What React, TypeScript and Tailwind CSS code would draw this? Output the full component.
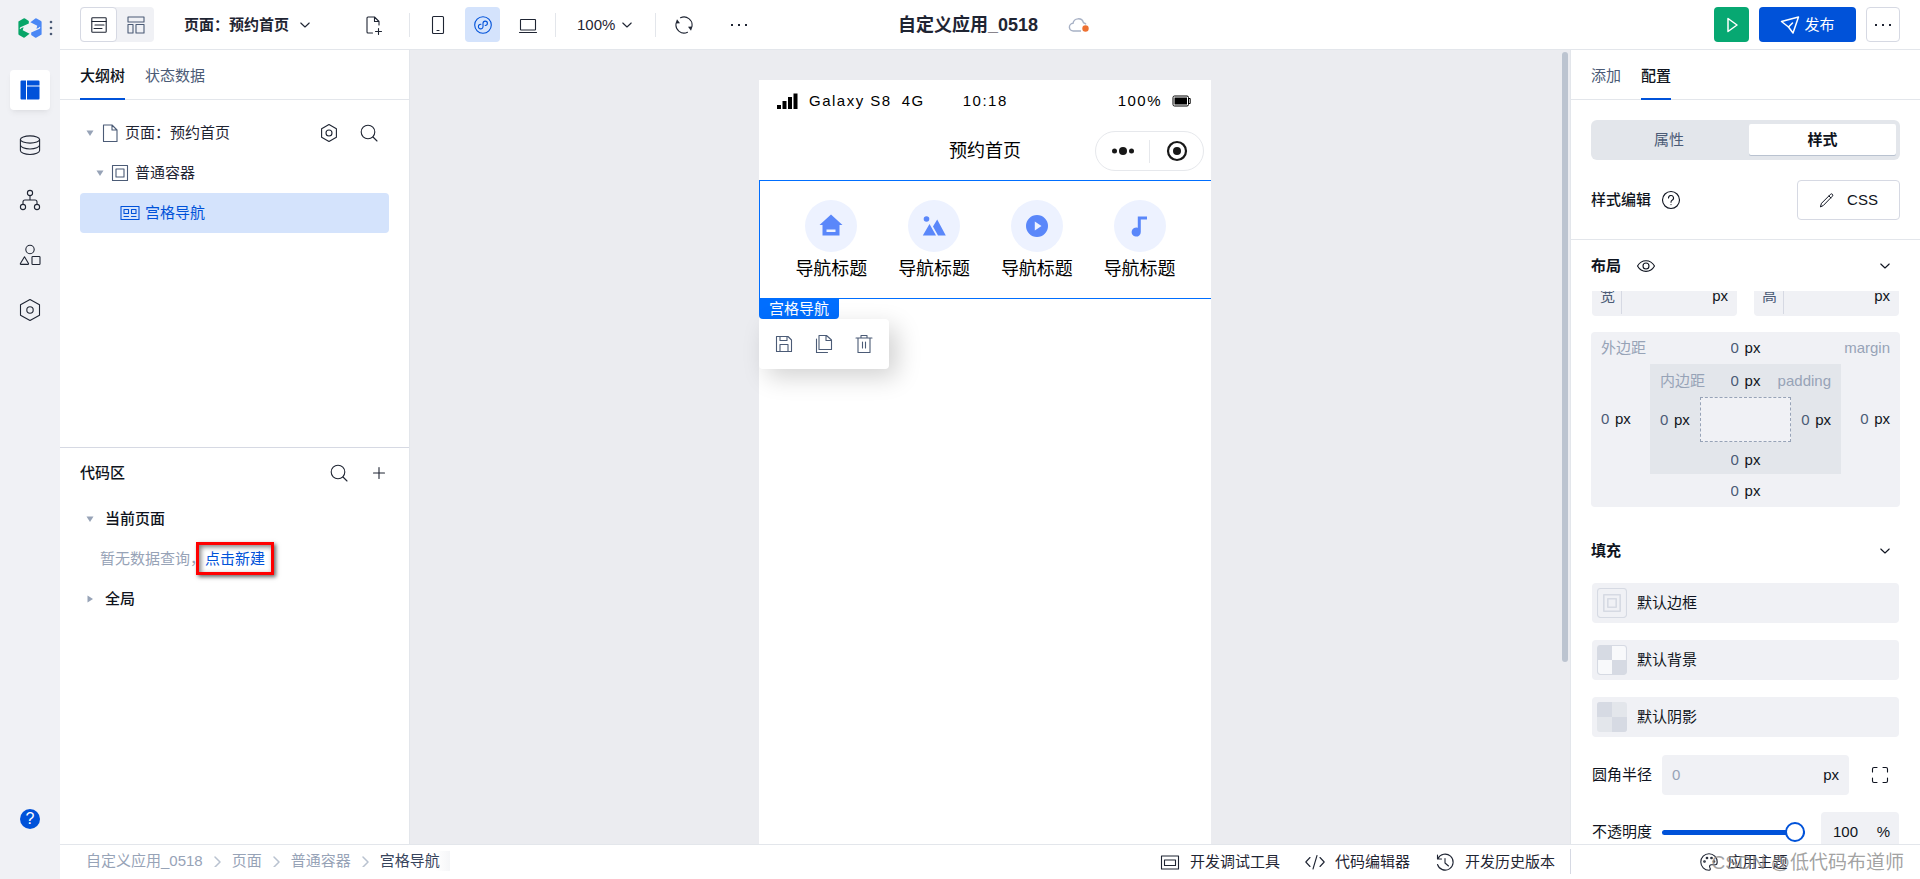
import { useState } from "react"
import type { ReactNode } from "react"

type IconProps = {
  children: ReactNode
  className?: string
  box?: string
}

function Icon({ children, className = "size-5", box = "0 0 20 20" }: IconProps) {
  return (
    <svg
      viewBox={box}
      className={`shrink-0 ${className}`}
      fill="none"
      stroke="currentColor"
      strokeWidth="1.1"
      strokeLinecap="round"
      strokeLinejoin="round"
      aria-hidden="true"
    >
      {children}
    </svg>
  )
}

const Chevron = () => (
  <Icon className="size-3" box="0 0 12 12">
    <path d="M1.8 4 6 8 10.2 4" />
  </Icon>
)

const SearchIcon = () => (
  <Icon>
    <circle cx="9" cy="9" r="6.8" />
    <path d="m14 14 4 4" />
  </Icon>
)

const HexIcon = ({ className }: { className?: string }) => (
  <Icon className={className}>
    <path d="M10 1.5 17.4 5.7v8.6L10 18.5l-7.4-4.2V5.7z" />
    <circle cx="10" cy="10" r="3" />
  </Icon>
)

const Dots = () => (
  <Icon>
    <g fill="currentColor" stroke="none">
      <rect x="2" y="9" width="2" height="2" />
      <rect x="9" y="9" width="2" height="2" />
      <rect x="16" y="9" width="2" height="2" />
    </g>
  </Icon>
)

const Caret = ({ open = true }: { open?: boolean }) => (
  <svg viewBox="0 0 8 8" className="size-2 shrink-0 fill-[#97a3b7]" aria-hidden="true">
    <path d={open ? "M.5 1.5h7L4 7z" : "M1.5.5v7L7 4z"} />
  </svg>
)

const Divider = () => <div className="h-6 w-px bg-[#e3e6eb]" />

function Logo() {
  const half =
    "M.4 3.500 5.500.5Q6.300 0 7 .5L10.800 3V5.600L2.400 9.300Q1 10.300 2.200 11.200Q3.200 9.600 5.600 9.200L4.700 12.200 11.600 15.800 7 19.300Q6.200 19.900 5.400 19.400L1 17Q.4 16.600.4 16z"
  return (
    <svg viewBox="0 0 24 20" className="h-5 w-6 shrink-0" aria-hidden="true">
      <path fill="#07a568" d={half} />
      <path fill="#4a87f5" d={half} transform="rotate(180 12 10)" />
    </svg>
  )
}

function SideRail() {
  const item = "flex size-10 items-center justify-center rounded"
  return (
    <nav className="flex w-15 shrink-0 flex-col items-center bg-[#f0f1f5] pb-[50px] text-[#1f2533]">
      <div className="flex h-[55px] w-full items-center gap-1 pl-[18px]">
        <Logo />
        <button aria-label="更多应用">
          <svg viewBox="0 0 10 16" className="h-4 w-[10px] fill-[#4b5b76]">
            <circle cx="5" cy="2" r="1.300" />
            <circle cx="5" cy="8" r="1.300" />
            <circle cx="5" cy="14" r="1.300" />
          </svg>
        </button>
      </div>
      <div className="mt-[15px] flex flex-1 flex-col gap-[15px]">
        <button className={`${item} bg-white text-[#0052d9] shadow-md shadow-black/5`} aria-label="页面">
          <Icon>
            <g fill="currentColor" stroke="none">
              <path d="M1.500.5H6v19H1.500a1 1 0 0 1-1-1v-17a1 1 0 0 1 1-1zM7 .5h11.500a1 1 0 0 1 1 1V5.500H7zM7 6.500h12.500v12a1 1 0 0 1-1 1H7z" />
            </g>
          </Icon>
        </button>
        <button className={item} aria-label="数据">
          <Icon className="size-[22px]" box="0 0 22 22">
            <ellipse cx="11" cy="5.500" rx="9.600" ry="3.600" />
            <path d="M1.400 5.500v11c0 2.200 4.300 4 9.600 4s9.600-1.800 9.600-4v-11M1.400 11c0 2.200 4.300 4 9.600 4s9.600-1.800 9.600-4" />
          </Icon>
        </button>
        <button className={item} aria-label="流程">
          <Icon className="size-[22px]" box="0 0 22 22">
            <circle cx="11" cy="4" r="2.600" />
            <circle cx="4" cy="18" r="2.600" />
            <circle cx="18" cy="18" r="2.600" />
            <path d="M11 6.600V11M4 15.400V13q0-2 2-2h10q2 0 2 2v2.400" />
          </Icon>
        </button>
        <button className={item} aria-label="素材">
          <Icon className="size-[22px]" box="0 0 22 22">
            <circle cx="11" cy="5.500" r="4.200" />
            <path d="M5.500 12.800 9.500 19.500q.3.900-.6.900H2q-.9 0-.6-.9z" />
            <rect x="13" y="12.500" width="8" height="8" rx=".8" />
          </Icon>
        </button>
        <button className={item} aria-label="设置">
          <Icon className="size-6" box="0 0 24 24">
            <path d="M12 1.500 21.500 6.700v10.600L12 22.500l-9.500-5.200V6.700z" />
            <circle cx="12" cy="12" r="3.200" />
          </Icon>
        </button>
      </div>
      <button
        className="flex size-5 items-center justify-center rounded-full bg-[#0052d9] text-base text-white"
        aria-label="帮助"
      >
        ?
      </button>
    </nav>
  )
}

function TopBar() {
  const square = "flex size-[35px] items-center justify-center rounded"
  return (
    <header className="grid h-[50px] shrink-0 grid-cols-[1fr_auto_1fr] items-center border-b border-[#e3e6eb] px-5">
      <div className="flex items-center">
        <div className="flex rounded bg-[#f0f1f5]">
          <button
            className="flex h-[35px] w-[37px] items-center justify-center rounded border border-[#d6d9e3] bg-white"
            aria-label="编辑视图"
          >
            <Icon className="size-4" box="0 0 16 16">
              <rect x=".8" y=".8" width="14.400" height="14.400" rx=".8" />
              <path d="M1 4.500h14M4 8h9M3 11.500h8" />
            </Icon>
          </button>
          <button
            className="flex h-[35px] w-[37px] items-center justify-center text-[#4b5b76]"
            aria-label="布局视图"
          >
            <Icon className="size-[18px]" box="0 0 18 18">
              <path d="M1 1h16v5H1zM1 8.500h5v8.500H1zM9 8.500h8v8.500H9z" />
            </Icon>
          </button>
        </div>
        <button className="ml-[30px] flex items-center gap-[10px] font-bold">
          页面：预约首页
          <Chevron />
        </button>
        <button className="mr-[26px] ml-[52px]" aria-label="新建页面">
          <Icon>
            <path d="M9.500 18H5q-1 0-1-1V3q0-1 1-1h6.500L16 6.500V10M11.500 2v4.500H16M15.500 13.500v6M12.500 16.500h6" />
          </Icon>
        </button>
        <Divider />
        <div className="mx-[10px] flex items-center gap-[10px]">
          <button className={square} aria-label="手机">
            <Icon>
              <rect x="4.500" y="1.500" width="11" height="17" rx="1" />
              <path d="M9 15.500h2" />
            </Icon>
          </button>
          <button className={`${square} bg-[#d4e3fc] text-[#0052d9]`} aria-label="小程序">
            <Icon>
              <circle cx="10" cy="10" r="8.300" />
              <path d="M8 9.300a2.300 2.300 0 1 0 2 2.400V8.200a2.200 2.200 0 1 1 2.200 2.300" />
            </Icon>
          </button>
          <button className={square} aria-label="电脑">
            <Icon>
              <rect x="2.500" y="4.500" width="15" height="10.500" rx=".5" />
              <path d="M1.500 17.500h17" />
            </Icon>
          </button>
        </div>
        <Divider />
        <button className="mr-[22px] ml-[21px] flex items-center gap-[6px]">
          100%
          <Chevron />
        </button>
        <Divider />
        <button className="ml-[18px]" aria-label="刷新">
          <Icon>
            <path d="M6.500 2.800a8 8 0 0 1 11.400 8.700M13.500 17.200A8 8 0 0 1 2.100 8.500" />
            <path d="M1.500 8.500 3 4.300 6 8.300zM14 11.700l4.500-.2-1.500 4.200z" fill="currentColor" stroke="none" />
          </Icon>
        </button>
        <button className="ml-[35px]" aria-label="更多操作">
          <Dots />
        </button>
      </div>

      <div className="flex items-center gap-[30px] pl-2">
        <h1 className="text-lg font-bold">自定义应用_0518</h1>
        <svg viewBox="0 0 22 20" className="h-5 w-[22px]" fill="none" aria-label="未保存">
          <path
            d="M13 16H5.500A3.800 3.800 0 0 1 5 8.300a5.400 5.400 0 0 1 10.500-.6q1.700.4 2.500 1.600"
            stroke="#a7b1c5"
            strokeWidth="1.400"
          />
          <circle cx="17.500" cy="13.500" r="3.200" fill="#ed7132" />
        </svg>
      </div>

      <div className="flex items-center justify-end gap-[10px]">
        <button className={`${square} bg-[#07a872] text-white`} aria-label="预览">
          <Icon>
            <path d="M6 3.500 15 10l-9 6.500z" strokeWidth="1.500" />
          </Icon>
        </button>
        <button className="flex h-[35px] w-[97px] items-center justify-center gap-1 rounded bg-[#0052d9] text-white">
          <Icon>
            <path d="M1.500 6.500 18.500 2l-5.500 16-4.500-6z" strokeWidth="1.500" />
            <path d="m8.500 12 4-4" strokeWidth="1.500" />
          </Icon>
          发布
        </button>
        <button
          className="flex h-[35px] w-[34px] items-center justify-center rounded border border-[#d6d9e3]"
          aria-label="更多"
        >
          <Dots />
        </button>
      </div>
    </header>
  )
}

type TabsProps = {
  items: string[]
  active: number
  onChange: (i: number) => void
}

function Tabs({ items, active, onChange }: TabsProps) {
  return (
    <div className="flex h-[50px] shrink-0 gap-5 border-b border-[#e3e6eb] px-5">
      {items.map((name, i) => (
        <button
          key={name}
          onClick={() => onChange(i)}
          className={
            i === active
              ? "-mb-px border-b-2 border-[#0052d9] pt-[3px] font-medium text-[#0f1420]"
              : "-mb-px border-b-2 border-transparent pt-[3px] text-[#4b5b76]"
          }
        >
          {name}
        </button>
      ))}
    </div>
  )
}

function OutlinePanel() {
  const [tab, setTab] = useState(0)

  return (
    <aside className="flex w-[350px] shrink-0 flex-col border-r border-[#e3e6eb]">
      <section className="flex min-h-0 flex-1 flex-col">
        <Tabs items={["大纲树", "状态数据"]} active={tab} onChange={setTab} />
        <ul className="px-5 pt-[13px]">
          <li className="flex h-10 items-center pl-[6px]">
            <Caret />
            <Icon className="mr-[5px] ml-[6px] size-5 text-[#4b5b76]">
              <path d="M3.500 2h8.500l5 5v11.500H3.500zM12 2v5h5" />
            </Icon>
            <span className="flex-1">页面：预约首页</span>
            <div className="mr-[10px] flex gap-5">
              <button aria-label="页面设置">
                <HexIcon />
              </button>
              <button aria-label="搜索组件">
                <SearchIcon />
              </button>
            </div>
          </li>
          <li className="flex h-10 items-center pl-4">
            <Caret />
            <Icon className="mr-[5px] ml-[6px] size-5 text-[#4b5b76]">
              <rect x="2.500" y="2.500" width="15" height="15" />
              <rect x="6" y="6" width="8" height="8" />
            </Icon>
            普通容器
          </li>
          <li className="flex h-10 items-center gap-[5px] rounded bg-[#d4e3fc] pl-10 text-[#0052d9]">
            <Icon>
              <rect x="1" y="3.500" width="18" height="13" />
              <path d="M4 6.500h4.500v4H4zM11.500 6.500H16v4h-4.500zM4 13.500h4.500M11.500 13.500H16" />
            </Icon>
            宫格导航
          </li>
        </ul>
      </section>

      <section className="min-h-0 flex-1 border-t border-[#d6d9e3]">
        <div className="flex h-[51px] items-center gap-5 px-5">
          <h2 className="flex-1 font-medium text-[#0f1420]">代码区</h2>
          <button aria-label="搜索代码">
            <SearchIcon />
          </button>
          <button aria-label="新建代码">
            <Icon>
              <path d="M10 4.500v11M4.500 10h11" />
            </Icon>
          </button>
        </div>
        <ul className="px-5">
          <li className="flex h-10 items-center gap-[11px] pl-[6px] font-medium text-[#0f1420]">
            <Caret />
            当前页面
          </li>
          <li className="flex h-10 items-center pl-5 text-[#97a3b7]">
            <span className="-mr-[9px]">暂无数据查询，</span>
            <a
              href="#new"
              className="flex h-[33px] w-[78px] items-center justify-center border-3 border-[#ff0000] text-[#0052d9] shadow-[2px_2px_4px_rgba(0,0,0,0.6),inset_2px_2px_5px_rgba(0,0,0,0.5)]"
            >
              点击新建
            </a>
          </li>
          <li className="flex h-10 items-center gap-[11px] pl-[6px] font-medium text-[#0f1420]">
            <Caret open={false} />
            全局
          </li>
        </ul>
      </section>
    </aside>
  )
}

const navIcons = [
  <path key="home" fillRule="evenodd" d="M12 .5 23.500 11H20.500v10.500h-17V11H.5zM7.500 15.500V18h9v-2.500z" />,
  <g key="image">
    <circle cx="4.500" cy="5" r="2.800" />
    <path d="M.8 21.500 7.500 10 14 21.500zM15.200 5.500 23.800 21.500H16L11 12.500z" />
  </g>,
  <path key="play" fillRule="evenodd" d="M12 1a11 11 0 1 0 0 22 11 11 0 0 0 0-22zM9.800 7.500 16.500 12l-6.700 4.500z" />,
  <path key="music" d="M9.800 2.500h9.200v3h-6.200V18a4.600 4.600 0 1 1-3-4.300z" />,
]

function Phone() {
  return (
    <div className="mt-[30px] flex w-[452px] flex-col bg-white text-black">
      <div className="flex h-[42px] items-center pr-[20px] pl-[18px] text-[15px] tracking-widest">
        <svg viewBox="0 0 21 16" className="mr-[11px] h-4 w-[21px]" aria-hidden="true">
          <path d="M0 12h4v4H0zM5.500 8h4v8h-4zM11 4h4v12h-4zM16.500.5h4V16h-4z" />
        </svg>
        <span className="mr-[10px]">Galaxy S8</span>
        <span className="mr-[38px]">4G</span>
        <span className="flex-1">10:18</span>
        <span>100%</span>
        <svg viewBox="0 0 19 12" className="ml-[10px] h-3 w-[19px]" fill="none" aria-hidden="true">
          <rect x="1" y="1" width="15.500" height="10" rx="1.500" stroke="#000" />
          <rect x="2.500" y="2.500" width="12.500" height="7" fill="#000" />
          <path d="M17 3.500h1.200v5H17" stroke="#000" />
        </svg>
      </div>

      <div className="grid h-[58px] grid-cols-[1fr_auto_1fr] items-center">
        <h2 className="col-start-2 text-lg leading-6">预约首页</h2>
        <div className="mr-[7px] flex h-10 w-[109px] items-center justify-self-end rounded-full border border-[#e6e8ec]">
          <button className="flex flex-1 justify-center" aria-label="菜单">
            <svg viewBox="0 0 24 10" className="h-[10px] w-6 fill-[#181818]">
              <circle cx="3.500" cy="5" r="2.500" />
              <circle cx="12" cy="5" r="4" />
              <circle cx="20.500" cy="5" r="2.500" />
            </svg>
          </button>
          <span className="h-[23px] w-px bg-[#e6e8ec]" />
          <button className="flex flex-1 justify-center" aria-label="关闭">
            <svg viewBox="0 0 22 22" className="size-[22px]">
              <circle cx="11" cy="11" r="9" fill="none" stroke="#181818" strokeWidth="2.200" />
              <circle cx="11" cy="11" r="4" fill="#181818" />
            </svg>
          </button>
        </div>
      </div>

      <div className="border-y border-l border-[#006eff] px-5">
        <div className="grid grid-cols-4 pt-[19px] pb-4">
          {navIcons.map((shape, i) => (
            <div key={i} className="flex flex-col items-center">
              <div className="flex size-[52px] items-center justify-center rounded-full bg-[#edf2ff]">
                <svg viewBox="0 0 24 24" className="size-6 fill-[#5a87fa]" aria-hidden="true">
                  {shape}
                </svg>
              </div>
              <span className="pt-[5px] pb-px text-lg leading-6">导航标题</span>
            </div>
          ))}
        </div>
      </div>

      <span className="flex h-5 w-20 items-center justify-center rounded-b bg-[#006eff] text-white">宫格导航</span>
      <div className="flex h-[50px] w-[130px] items-center justify-center gap-5 rounded bg-white text-[#4b5b76] shadow-[8px_8px_24px_rgba(0,0,0,0.18)]">
        <button aria-label="保存">
          <Icon>
            <path d="M2.500 2.500H14L17.500 6v11.500h-15zM6 2.500v4h7v-4M6 17.500v-7h8v7" />
          </Icon>
        </button>
        <button aria-label="复制">
          <Icon>
            <path d="M5 1.500h7.500L17.500 6v9.500H5zM12 1.500v5h5.500M2.500 5v13.500h11" />
          </Icon>
        </button>
        <button aria-label="删除">
          <Icon>
            <path d="M2 4h16M7 4V1.500h6V4M4 4v14.500h12V4M8.500 8v6M11.500 8v6" />
          </Icon>
        </button>
      </div>
    </div>
  )
}

function Px({ label }: { label: string }) {
  return (
    <label className="flex items-center gap-[5px] leading-5">
      <input
        aria-label={label}
        defaultValue="0"
        className="w-[9px] bg-transparent text-[#4b5b76] outline-none"
      />
      px
    </label>
  )
}

function BoxModel() {
  return (
    <div className="mt-4 flex flex-col items-center rounded bg-[#f0f1f5]">
      <div className="grid h-8 w-full grid-cols-[1fr_auto_1fr] items-center px-[10px] text-[#97a3b7]">
        <span>外边距</span>
        <span className="text-[#0f1420]">
          <Px label="上外边距" />
        </span>
        <span className="text-right">margin</span>
      </div>
      <div className="flex w-full items-center justify-between px-[10px]">
        <Px label="左外边距" />
        <div className="flex h-[110px] w-[191px] flex-col items-center bg-[#e3e6eb] px-[10px]">
          <div className="grid h-[33px] w-full grid-cols-[1fr_auto_1fr] items-center text-[#97a3b7]">
            <span>内边距</span>
            <span className="text-[#0f1420]">
              <Px label="上内边距" />
            </span>
            <span className="text-right">padding</span>
          </div>
          <div className="flex w-full items-center justify-between">
            <Px label="左内边距" />
            <div className="h-[45px] w-[91px] border border-dashed border-[#97a3b7] bg-[#f0f1f5]" />
            <Px label="右内边距" />
          </div>
          <div className="flex flex-1 items-center pt-1">
            <Px label="下内边距" />
          </div>
        </div>
        <Px label="右外边距" />
      </div>
      <div className="flex h-[33px] items-center">
        <Px label="下外边距" />
      </div>
    </div>
  )
}

const fills = [
  {
    name: "默认边框",
    icon: (
      <Icon className="size-[30px] text-[#d6dae3]" box="0 0 30 30">
        <rect x=".5" y=".5" width="29" height="29" rx="3" />
        <rect x="6.800" y="6.800" width="16.400" height="16.400" strokeWidth="1.600" />
        <rect x="10.800" y="10.800" width="8.400" height="8.400" strokeWidth="1.600" />
      </Icon>
    ),
  },
  {
    name: "默认背景",
    icon: (
      <Icon className="size-[30px] text-[#d6dae3]" box="0 0 30 30">
        <rect x=".5" y=".5" width="29" height="29" rx="3" fill="#f8f9fb" />
        <path d="M1 1h14v14H1zM15 15h14v14H15z" fill="currentColor" stroke="none" />
      </Icon>
    ),
  },
  {
    name: "默认阴影",
    icon: (
      <Icon className="size-[30px] text-[#d6dae3]" box="0 0 30 30">
        <g stroke="none">
          <rect width="30" height="30" rx="3" fill="#e3e6eb" />
          <path d="M3 0h12v15H0V3q0-3 3-3zM15 15h15v12q0 3-3 3H15z" fill="currentColor" />
        </g>
      </Icon>
    ),
  },
]

function ConfigPanel() {
  const [tab, setTab] = useState(1)
  const [opacity, setOpacity] = useState(100)

  return (
    <aside className="flex w-[350px] shrink-0 flex-col border-l border-[#e3e6eb] text-[#0f1420]">
      <Tabs items={["添加", "配置"]} active={tab} onChange={setTab} />

      <div className="shrink-0 border-b border-[#e3e6eb] px-5 pt-5 pb-[19px]">
        <div className="flex h-10 rounded-md bg-[#e3e6eb] p-1">
          <button className="flex-1 pr-[6px] text-[#4b5b76]">属性</button>
          <button className="mb-px w-[147px] rounded-xs bg-white font-bold shadow-[0_1px_0_#b9c2d0]">样式</button>
        </div>
        <div className="mt-5 flex items-center justify-between">
          <div className="flex items-center gap-[10px] font-medium">
            样式编辑
            <Icon>
              <circle cx="10" cy="10" r="8.500" />
              <path d="M7.500 8a2.500 2.500 0 1 1 3.600 2.200q-1.100.6-1.100 2M10 14.500v.1" />
            </Icon>
          </div>
          <button className="flex h-10 w-[103px] items-center justify-center gap-3 rounded border border-[#d6d9e3]">
            <Icon className="size-4" box="0 0 16 16">
              <path d="M1.500 14.500 2.500 11.300 11.500 2.300q1-.9 1.900 0t0 1.900L4.500 13.300zM10 4l1.900 1.900" strokeWidth="1" />
            </Icon>
            CSS
          </button>
        </div>
      </div>

      <div className="flex h-[51px] shrink-0 items-center px-5 font-bold">
        布局
        <Icon className="ml-[15px] size-5">
          <path d="M1.500 10C5.500 2.900 14.500 2.900 18.500 10 14.500 17.100 5.500 17.100 1.500 10z" />
          <circle cx="10" cy="10" r="3" />
        </Icon>
        <button className="mr-[9px] ml-auto" aria-label="折叠布局">
          <Chevron />
        </button>
      </div>

      <div className="min-h-0 flex-1 overflow-hidden px-5">
        {/* first row sits half scrolled under the section header */}
        <div className="-mt-[15px] flex justify-between gap-[17px] px-px">
          {["宽", "高"].map((name) => (
            <label key={name} className="flex h-10 min-w-0 flex-1 items-center rounded bg-[#f0f1f5] pr-[9px] pl-2">
              <span className="w-[21px] text-[#4b5b76]">{name}</span>
              <span className="mt-[5px] h-[30px] w-px bg-[#d6d9e3]" />
              <input className="min-w-0 flex-1 bg-transparent outline-none" />
              px
            </label>
          ))}
        </div>

        <BoxModel />

        <div className="mt-[19px] flex h-[50px] items-center font-bold">
          填充
          <button className="mr-[9px] ml-auto" aria-label="折叠填充">
            <Chevron />
          </button>
        </div>

        <div className="mt-[7px] flex flex-col gap-[17px] px-px">
          {fills.map((f) => (
            <button key={f.name} className="flex h-10 items-center gap-[10px] rounded bg-[#f0f1f5] px-[5px]">
              {f.icon}
              {f.name}
            </button>
          ))}

          <div className="mt-px flex items-center">
            <label htmlFor="radius" className="w-[70px]">
              圆角半径
            </label>
            <div className="flex h-10 min-w-0 flex-1 items-center rounded bg-[#f0f1f5] px-[10px]">
              <input
                id="radius"
                placeholder="0"
                className="min-w-0 flex-1 bg-transparent outline-none placeholder:text-[#97a3b7]"
              />
              px
            </div>
            <button className="mr-[9px] ml-[21px]" aria-label="独立圆角">
              <Icon>
                <path d="M2.500 7V4q0-1.500 1.500-1.500h3M13 2.500h3q1.500 0 1.500 1.500v3M17.500 13v3q0 1.500-1.500 1.500h-3M7 17.500H4q-1.500 0-1.500-1.500v-3" />
              </Icon>
            </button>
          </div>

          <div className="flex items-center">
            <label htmlFor="opacity" className="w-[70px]">
              不透明度
            </label>
            <input
              id="opacity"
              type="range"
              value={opacity}
              onChange={(e) => setOpacity(Number(e.target.value))}
              className="mr-4 h-[5px] min-w-0 flex-1 appearance-none rounded-full bg-[#0052d9] [&::-webkit-slider-thumb]:size-5 [&::-webkit-slider-thumb]:appearance-none [&::-webkit-slider-thumb]:rounded-full [&::-webkit-slider-thumb]:border-2 [&::-webkit-slider-thumb]:border-solid [&::-webkit-slider-thumb]:border-[#0052d9] [&::-webkit-slider-thumb]:bg-white"
            />
            <div className="flex h-10 w-[78px] items-center rounded bg-[#f0f1f5] pr-[9px] pl-3">
              <input
                aria-label="不透明度数值"
                value={opacity}
                onChange={(e) => setOpacity(Number(e.target.value) || 0)}
                className="min-w-0 flex-1 bg-transparent outline-none"
              />
              %
            </div>
          </div>
        </div>
      </div>
    </aside>
  )
}

function Footer() {
  const crumbs = ["自定义应用_0518", "页面", "普通容器"]
  return (
    <footer className="flex h-[35px] shrink-0 border-t border-[#e3e6eb]">
      <nav className="flex flex-1 items-center gap-[9px] pb-[2px] pl-[26px] text-[#97a3b7]">
        {crumbs.map((c) => (
          <div key={c} className="flex items-center gap-[9px]">
            <a href="#crumb">{c}</a>
            <Icon className="size-[11px] text-[#b9c2d0]" box="0 0 11 11">
              <path d="M3 1l5 5-5 5" strokeWidth="1.500" />
            </Icon>
          </div>
        ))}
        <a href="#crumb" className="bg-linear-to-l from-[#f5f6f8] to-white to-20% pr-[10px] text-[#37445c]">
          宫格导航
        </a>
      </nav>
      <div className="flex items-center gap-[25px] pr-[15px] pb-px">
        <button className="flex items-center gap-[10px]">
          <Icon>
            <path d="M1.500 4h17v13h-17zM4.500 8h11v5.500h-11z" />
          </Icon>
          开发调试工具
        </button>
        <button className="flex items-center gap-[10px]">
          <Icon>
            <path d="M5 5.500.8 10 5 14.500M15 5.500l4.200 4.500-4.200 4.500M12 3.500 8 17" />
          </Icon>
          代码编辑器
        </button>
        <button className="flex items-center gap-[10px]">
          <Icon>
            <path d="M2.500 3v4h4M3 6.500a8 8 0 1 1-.5 6M10 6.500v4.500l3.500 3" />
          </Icon>
          开发历史版本
        </button>
      </div>
      <div className="relative flex w-[350px] items-center justify-center pr-1 pb-px">
        <span className="mr-auto h-[25px] w-px bg-[#d6d9e3]" />
        <button className="mr-auto flex items-center gap-2">
          <Icon>
            <path d="M10 1.800a8.200 8.200 0 1 0 0 16.400q2-.3 1-2.200-1.500-3.500 2-3.200h3.500q1.700-.2 1.700-2.800A8.200 8.200 0 0 0 10 1.800z" />
            <circle cx="5.500" cy="9.500" r=".8" />
            <circle cx="8" cy="6" r=".8" />
            <circle cx="12.500" cy="6" r=".8" />
            <circle cx="15" cy="9.500" r=".8" />
          </Icon>
          应用主题
        </button>
        <span className="absolute right-4 bottom-1 text-[19px] leading-6 whitespace-nowrap text-[#8a8a8a]/80">
          CSDN @低代码布道师
        </span>
      </div>
    </footer>
  )
}

export default function App() {
  return (
    <div className="flex h-screen overflow-hidden bg-white font-['Liberation_Sans','Noto_Sans_CJK_SC',sans-serif] text-[15px] leading-5 text-[#1f2533]">
      <SideRail />
      <div className="flex min-w-0 flex-1 flex-col">
        <TopBar />
        <div className="flex min-h-0 flex-1">
          <OutlinePanel />
          <main className="flex min-w-0 flex-1 bg-[#ebecf0]">
            <div className="flex min-w-0 flex-1 justify-center">
              <Phone />
            </div>
            <div className="w-[10px] pt-[2px] pl-[2px]">
              <div className="h-[77%] w-[6px] rounded-full bg-[#bcc4d0]" />
            </div>
          </main>
          <ConfigPanel />
        </div>
        <Footer />
      </div>
    </div>
  )
}
